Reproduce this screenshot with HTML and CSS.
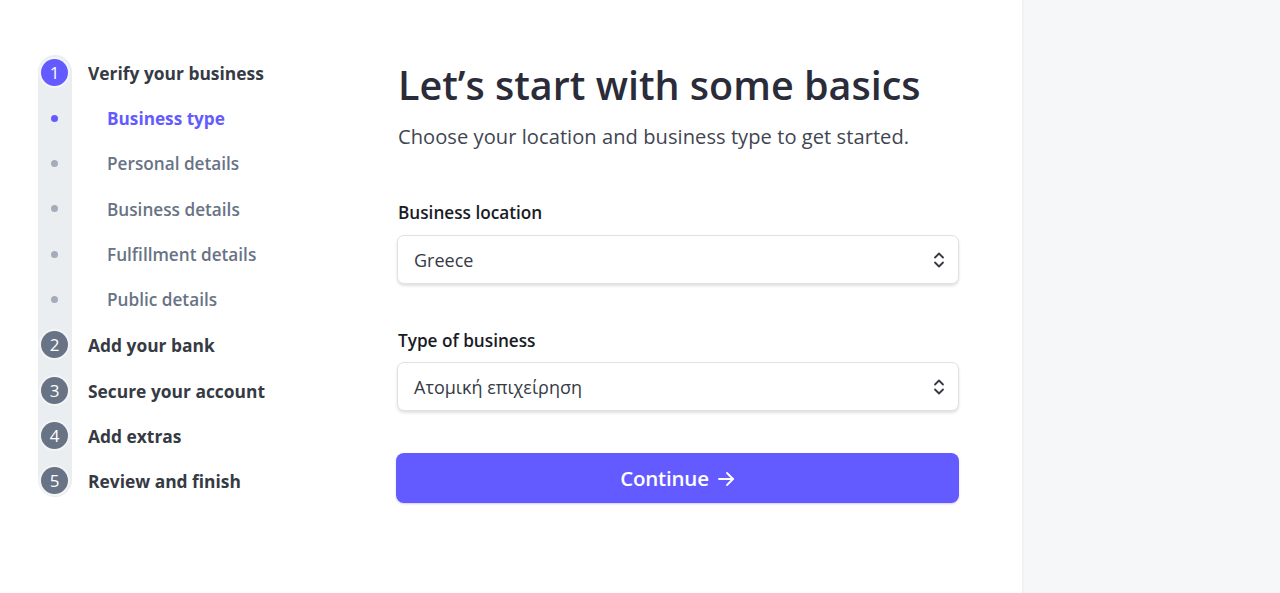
FILE: index.html
```html
<!DOCTYPE html>
<html lang="en">
<head>
<meta charset="utf-8">
<title>Let's start with some basics</title>
<link rel="stylesheet" href="styles.css">
</head>
<body>
<div class="page">
  <main class="main">
    <nav class="steps">
      <ul class="step-list">
        <li class="step"><span class="icon"><span class="num num-active">1</span></span><span class="label main-step">Verify your business</span></li>
        <li class="step"><span class="icon"><span class="dot dot-active"></span></span><span class="label sub-step sub-active">Business type</span></li>
        <li class="step"><span class="icon"><span class="dot"></span></span><span class="label sub-step">Personal details</span></li>
        <li class="step"><span class="icon"><span class="dot"></span></span><span class="label sub-step">Business details</span></li>
        <li class="step"><span class="icon"><span class="dot"></span></span><span class="label sub-step">Fulfillment details</span></li>
        <li class="step"><span class="icon"><span class="dot"></span></span><span class="label sub-step">Public details</span></li>
        <li class="step"><span class="icon"><span class="num">2</span></span><span class="label main-step">Add your bank</span></li>
        <li class="step"><span class="icon"><span class="num">3</span></span><span class="label main-step">Secure your account</span></li>
        <li class="step"><span class="icon"><span class="num">4</span></span><span class="label main-step">Add extras</span></li>
        <li class="step"><span class="icon"><span class="num">5</span></span><span class="label main-step">Review and finish</span></li>
      </ul>
    </nav>
    <section class="form">
      <h1 class="title">Let’s start with some basics</h1>
      <p class="subtitle">Choose your location and business type to get started.</p>
      <div class="field">
        <label class="field-label">Business location</label>
        <div class="select">
          <span class="select-value">Greece</span>
          <svg class="chev" width="12" height="18" viewBox="0 0 12 18" fill="none" stroke="#353a44" stroke-width="1.8" stroke-linecap="round" stroke-linejoin="round"><path d="M2 6.5 L6 2.5 L10 6.5"/><path d="M2 11.5 L6 15.5 L10 11.5"/></svg>
        </div>
      </div>
      <div class="field field-second">
        <label class="field-label">Type of business</label>
        <div class="select">
          <span class="select-value">Ατομική επιχείρηση</span>
          <svg class="chev" width="12" height="18" viewBox="0 0 12 18" fill="none" stroke="#353a44" stroke-width="1.8" stroke-linecap="round" stroke-linejoin="round"><path d="M2 6.5 L6 2.5 L10 6.5"/><path d="M2 11.5 L6 15.5 L10 11.5"/></svg>
        </div>
      </div>
      <button class="btn">Continue
        <svg class="arrow" width="18" height="16" viewBox="0 0 18 16" fill="none" stroke="#fff" stroke-width="1.8" stroke-linecap="round" stroke-linejoin="round"><path d="M2 8 H16"/><path d="M10 2 L16 8 L10 14"/></svg>
      </button>
    </section>
  </main>
  <aside class="aside"></aside>
</div>
</body>
</html>
```

FILE: styles.css
```css
* { box-sizing: border-box; }
html, body { margin: 0; padding: 0; height: 100%; }
body {
  font-family: "Open Sans", "Noto Sans", sans-serif;
  background: #fff;
  color: #353a44;
}
.page {
  display: flex;
  height: 593px;
  overflow: hidden;
}
.main {
  width: 1022px;
  flex: none;
  display: flex;
  align-items: flex-start;
}
.aside {
  flex: 1;
  background: #f6f7f9;
  box-shadow: inset 2px 0 3px -1px rgba(0,0,0,0.04);
}

/* Steps */
.steps {
  margin: 50px 0 0 38px;
  width: 359px;
  flex: none;
}
.step-list {
  list-style: none;
  margin: 0;
  padding: 0;
  position: relative;
  display: flex;
  flex-direction: column;
}
.step-list::before {
  content: "";
  position: absolute;
  left: 0;
  top: 5px;
  bottom: 6px;
  width: 34px;
  background: #ebeef1;
  border-radius: 17px;
}
.step {
  position: relative;
  height: 45.35px;
  display: flex;
  align-items: center;
  gap: 16px;
}
.icon {
  width: 34px;
  flex: none;
  display: flex;
  align-items: center;
  justify-content: center;
  padding-right: 1px;
}
.label {
  font-size: 17.2px;
  white-space: nowrap;
  padding-top: 1px;
}
.main-step { font-weight: 700; color: #353a44; font-size: 17.4px; }
.sub-step { font-weight: 600; color: #687385; padding-left: 19px; }
.sub-active { color: #635bff; font-weight: 700; }
.num {
  width: 27px;
  height: 27px;
  border-radius: 50%;
  background: #687385;
  color: #fff;
  display: flex;
  align-items: center;
  justify-content: center;
  font-size: 17px;
  font-weight: 400;
  box-shadow: 0 0 0 2px #f3f4f6;
}
.num-active { background: #635bff; }
.dot {
  width: 7px;
  height: 7px;
  border-radius: 50%;
  background: #a3acba;
}
.dot-active { background: #635bff; }

/* Form */
.form {
  width: 562px;
  flex: none;
  padding-top: 59px;
}
.title {
  margin: 0;
  font-size: 39.5px;
  font-weight: 600;
  letter-spacing: 0;
  line-height: 52px;
  color: #2a2c3a;
  padding-left: 1px;
}
.subtitle {
  margin: 12px 0 0;
  font-size: 20.1px;
  font-weight: 400;
  letter-spacing: 0.05px;
  line-height: 28px;
  color: #414552;
  padding-left: 1px;
}
.field { margin-top: 50px; }
.field-second { margin-top: 45px; }
.field-label {
  display: block;
  font-size: 17.2px;
  font-weight: 600;
  line-height: 24px;
  color: #1a1b25;
  padding-left: 1px;
}
.select {
  margin-top: 10px;
  height: 49px;
  border-radius: 7px;
  border: 1px solid #dfe1e5;
  box-shadow: 0 2px 3px rgba(0,0,0,0.12);
  display: flex;
  align-items: center;
  justify-content: space-between;
  padding: 0 13px 0 16px;
  background: #fff;
}
.field-second .select { margin-top: 9px; }
.select-value {
  font-size: 18px;
  font-weight: 500;
  color: #353a44;
}
.btn {
  margin-top: 42px;
  width: 563px;
  height: 50px;
  margin-left: -1px;
  border: none;
  border-radius: 8px;
  background: #635bff;
  color: #fff;
  font-family: inherit;
  font-size: 20.5px;
  font-weight: 600;
  letter-spacing: -0.2px;
  display: flex;
  align-items: center;
  justify-content: center;
  gap: 8px;
  box-shadow: 0 1px 2px rgba(99,91,255,0.3);
}
.arrow { margin-top: 1px; }
```
